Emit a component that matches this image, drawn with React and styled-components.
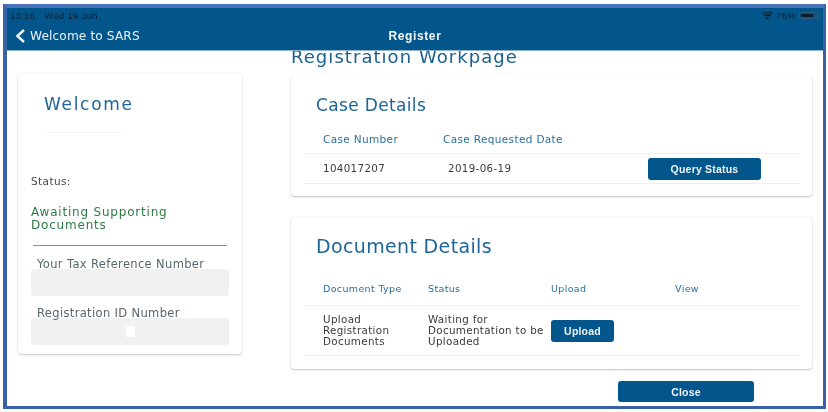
import React from "react";
import styled, { createGlobalStyle } from "styled-components";

const GlobalStyle = createGlobalStyle`
  html, body {
    margin: 0;
    padding: 0;
    background: #fff;
  }
  body {
    font-family: "DejaVu Sans", sans-serif;
  }
`;

const Frame = styled.div`
  box-sizing: border-box;
  width: 823px;
  height: 405px;
  margin: 4px 0 0 3px;
  border: 3px solid #3a60a6;
  border-top: 4px solid #4a72b8;
  border-left-width: 4px;
  background: #fff;
  overflow: hidden;
  filter: blur(0.5px);
`;

const Header = styled.header`
  box-sizing: border-box;
  position: relative;
  z-index: 1;
  height: 43px;
  background: #03568c;
  border-bottom: 1px solid #8fb4cc;
  padding: 2px 4px 0 3px;
`;

const StatusBar = styled.div`
  display: flex;
  justify-content: space-between;
  align-items: center;
  height: 11px;
  font-family: "Liberation Sans", sans-serif;
  font-size: 9.5px;
  letter-spacing: 0.3px;
  color: #0b1c2c;
`;

const StatusGroup = styled.div`
  display: flex;
  align-items: center;
  gap: ${(p) => p.$gap || 3}px;
`;

const Battery = styled.span`
  display: block;
  box-sizing: border-box;
  width: 20px;
  height: 7px;
  border: 1px solid #2a5a80;
  border-radius: 2px;
  padding: 1px;
  &::before {
    content: "";
    display: block;
    width: 76%;
    height: 100%;
    background: #0b1c2c;
  }
`;

const NavBar = styled.div`
  display: grid;
  grid-template-columns: 1fr auto 1fr;
  align-items: center;
  height: 24px;
  margin-top: 3px;
  padding: 0 4px 0 5px;
  color: #e8f0f6;
`;

const BackLink = styled.div`
  display: flex;
  align-items: center;
  gap: 5px;
  font-size: 12.2px;
  letter-spacing: 0.1px;
`;

const NavTitle = styled.div`
  font-family: "Liberation Sans", sans-serif;
  font-size: 12px;
  font-weight: 700;
  letter-spacing: 0.6px;
  color: #f2f6f9;
`;

const Content = styled.main`
  display: grid;
  grid-template-columns: 224px 521px;
  column-gap: 49px;
  padding: 0 0 0 11px;
`;

const Sidebar = styled.aside`
  box-sizing: border-box;
  height: 281px;
  margin-top: 22px;
  padding: 22px 13px 0 13px;
  background: #fff;
  border-radius: 4px;
  box-shadow: 0 1px 2px rgba(0, 0, 0, 0.22), 0 0 1px rgba(0, 0, 0, 0.08);
`;

const WelcomeTitle = styled.h2`
  margin: 0 0 0 13px;
  font-size: 17px;
  line-height: 18px;
  font-weight: 400;
  color: #1f6597;
  letter-spacing: 1.7px;
`;

const Faint = styled.div`
  width: 75px;
  height: 1px;
  margin: 19px 0 0 16px;
  background: #f4f4f4;
`;

const StatusLabel = styled.div`
  margin-top: 42px;
  font-size: 10.5px;
  line-height: 12px;
  color: #4a4a4a;
  letter-spacing: 0.4px;
`;

const StatusValue = styled.div`
  margin-top: 19px;
  font-size: 12px;
  line-height: 13px;
  color: #2f7a45;
  letter-spacing: 0.8px;
`;

const Rule = styled.hr`
  margin: 13px 2px 0 2px;
  border: 0;
  height: 1px;
  background: #6a97bd;
`;

const FieldLabel = styled.div`
  margin: ${(p) => p.$top}px 0 0 6px;
  font-size: 11.5px;
  line-height: 12px;
  color: #56666f;
  letter-spacing: 0.35px;
  white-space: nowrap;
`;

const FieldBox = styled.div`
  display: flex;
  align-items: center;
  justify-content: center;
  height: 27px;
  margin-top: ${(p) => p.$top || 0}px;
  background: #f1f1f1;
  border-radius: 3px;
`;

const Caret = styled.span`
  display: block;
  width: 9px;
  height: 11px;
  background: #fff;
`;

const MainColumn = styled.section`
  display: flex;
  flex-direction: column;
`;

const PageTitle = styled.h1`
  margin: -4px 0 0 0;
  font-size: 18px;
  line-height: 19px;
  font-weight: 400;
  color: #1a6093;
  letter-spacing: 1.05px;
  white-space: nowrap;
`;

const Card = styled.div`
  box-sizing: border-box;
  height: ${(p) => p.$height}px;
  margin-top: ${(p) => p.$top}px;
  padding: ${(p) => p.$pad}px 12px 0 13px;
  background: #fff;
  border-radius: 4px;
  box-shadow: 0 1px 2px rgba(0, 0, 0, 0.24), 0 0 1px rgba(0, 0, 0, 0.08);
`;

const CardTitle = styled.h2`
  margin: 0 0 0 12px;
  font-size: ${(p) => p.$size}px;
  line-height: 20px;
  font-weight: 400;
  color: #1f6597;
  letter-spacing: 0.35px;
`;

const Row = styled.div`
  box-sizing: border-box;
  display: grid;
  grid-template-columns: ${(p) => p.$cols};
  align-items: center;
  height: ${(p) => p.$height}px;
  margin-top: ${(p) => p.$top || 0}px;
  padding-left: 19px;
  border-bottom: 1px solid #efefef;
`;

const HeadCell = styled.div`
  font-size: ${(p) => p.$size}px;
  color: #2c6f9f;
  letter-spacing: 0.35px;
  white-space: nowrap;
`;

const Cell = styled.div`
  font-size: 10.3px;
  line-height: 11px;
  color: #3a3a3a;
  letter-spacing: 0.35px;
  white-space: pre-line;
`;

const Button = styled.button`
  box-sizing: border-box;
  display: block;
  width: ${(p) => p.$width}px;
  height: ${(p) => p.$height}px;
  margin: 0;
  padding: 0;
  border: 0;
  border-radius: 3px;
  background: #03568c;
  color: #eef3f7;
  font-family: "Liberation Sans", sans-serif;
  font-size: 10.5px;
  font-weight: 700;
  letter-spacing: 0.2px;
`;

const Footer = styled.div`
  display: flex;
  padding: 12px 0 0 327px;
`;

const WifiIcon = () => (
  <svg width="11" height="8" viewBox="0 0 22 16" fill="#0b1c2c">
    <path d="M11 16 7.4 11.6a5.6 5.6 0 0 1 7.2 0zM5.6 9.4 3.4 6.8a12 12 0 0 1 15.2 0l-2.2 2.6a8.6 8.6 0 0 0-10.8 0zM1.6 4.6 0 3a17 17 0 0 1 22 0l-1.6 1.6a14.6 14.6 0 0 0-18.8 0z" />
  </svg>
);

const BackChevron = () => (
  <svg width="10" height="14" viewBox="0 0 10 14" fill="none" stroke="#f2f6f9" strokeWidth="2.4">
    <path d="M9 1 2.4 7 9 13" />
  </svg>
);

const DOC_COLUMNS = "105px 123px 124px 1fr";

const App = () => {
  return (
    <>
      <GlobalStyle />
      <Frame>
        <Header>
          <StatusBar>
            <StatusGroup $gap={9}>
              <span>13:16</span>
              <span>Wed 19 Jun</span>
            </StatusGroup>
            <StatusGroup>
              <WifiIcon />
              <span>76%</span>
              <Battery />
            </StatusGroup>
          </StatusBar>
          <NavBar>
            <BackLink>
              <BackChevron />
              Welcome to SARS
            </BackLink>
            <NavTitle>Register</NavTitle>
          </NavBar>
        </Header>
        <Content>
          <Sidebar>
            <WelcomeTitle>Welcome</WelcomeTitle>
            <Faint />
            <StatusLabel>Status:</StatusLabel>
            <StatusValue>
              Awaiting Supporting
              <br />
              Documents
            </StatusValue>
            <Rule />
            <FieldLabel $top={12}>Your Tax Reference Number</FieldLabel>
            <FieldBox $top={-1} />
            <FieldLabel $top={11}>Registration ID Number</FieldLabel>
            <FieldBox $top={-1}>
              <Caret />
            </FieldBox>
          </Sidebar>
          <MainColumn>
            <PageTitle>Registration Workpage</PageTitle>
            <Card $height={121} $top={9} $pad={20}>
              <CardTitle $size={17}>Case Details</CardTitle>
              <Row $cols="120px 205px 1fr" $height={30} $top={9}>
                <HeadCell $size={10.5}>Case Number</HeadCell>
                <HeadCell $size={10.5}>Case Requested Date</HeadCell>
              </Row>
              <Row $cols="125px 200px 1fr" $height={30}>
                <Cell>104017207</Cell>
                <Cell>2019-06-19</Cell>
                <Button $width={113} $height={22}>Query Status</Button>
              </Row>
            </Card>
            <Card $height={152} $top={21} $pad={19}>
              <CardTitle $size={19}>Document Details</CardTitle>
              <Row $cols={DOC_COLUMNS} $height={35} $top={15}>
                <HeadCell $size={9.5}>Document Type</HeadCell>
                <HeadCell $size={9.5}>Status</HeadCell>
                <HeadCell $size={9.5}>Upload</HeadCell>
                <HeadCell $size={9.5}>View</HeadCell>
              </Row>
              <Row $cols={DOC_COLUMNS} $height={50}>
                <Cell>{"Upload\nRegistration\nDocuments"}</Cell>
                <Cell>{"Waiting for\nDocumentation to be\nUploaded"}</Cell>
                <Button $width={63} $height={22}>Upload</Button>
              </Row>
            </Card>
            <Footer>
              <Button $width={136} $height={21}>Close</Button>
            </Footer>
          </MainColumn>
        </Content>
      </Frame>
    </>
  );
};

export default App;
